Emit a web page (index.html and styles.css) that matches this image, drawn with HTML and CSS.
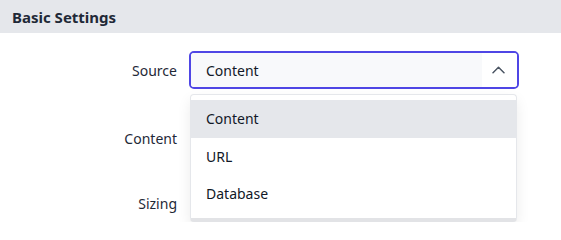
FILE: index.html
```html
<!DOCTYPE html>
<html lang="en">
<head>
<meta charset="utf-8">
<title>Basic Settings</title>
<link rel="stylesheet" href="styles.css">
</head>
<body>
  <div class="section-header">Basic Settings</div>
  <div class="form">
    <div class="row row-source">
      <label class="label">Source</label>
      <div class="select">
        <div class="select-box">
          <span class="select-value">Content</span>
          <span class="select-arrow">
            <svg width="13" height="8" viewBox="0 0 13 8"><polyline points="1,6.8 6.5,1.3 12,6.8" fill="none" stroke="#4b5563" stroke-width="1.5" stroke-linecap="round" stroke-linejoin="round"/></svg>
          </span>
        </div>
        <ul class="menu">
          <li class="menu-item active">Content</li>
          <li class="menu-item">URL</li>
          <li class="menu-item">Database</li>
        </ul>
      </div>
    </div>
    <div class="row row-content">
      <label class="label">Content</label>
      <div class="control"></div>
    </div>
    <div class="row row-sizing">
      <label class="label">Sizing</label>
      <div class="control"></div>
    </div>
  </div>
</body>
</html>
```

FILE: styles.css
```css
* { box-sizing: border-box; }
body {
  margin: 0;
  background: #ffffff;
  font-family: "Noto Sans", "Open Sans", sans-serif;
  font-size: 14px;
  color: #111827;
}
.section-header {
  height: 33px;
  background: #e5e7eb;
  display: flex;
  align-items: center;
  padding-left: 12px;
  font-weight: 700;
  font-size: 15px;
  color: #1f2937;
}
.form {
  padding-top: 18px;
  display: flex;
  flex-direction: column;
}
.row {
  display: grid;
  grid-template-columns: 177px 330px;
  column-gap: 12px;
  align-items: center;
  height: 38px;
}
.row-content { margin-top: 30px; }
.row-sizing { margin-top: 27px; }
.label {
  text-align: right;
  color: #1f2937;
}
.select {
  position: relative;
  height: 38px;
}
.select-box {
  height: 38px;
  border: 2px solid #4f46e5;
  border-radius: 5px;
  display: flex;
  overflow: hidden;
  background: #ffffff;
}
.select-value {
  flex: 1;
  background: #f8f9fb;
  display: flex;
  align-items: center;
  padding-left: 15px;
  color: #111827;
}
.select-arrow {
  width: 35px;
  display: flex;
  align-items: center;
  justify-content: center;
  background: #ffffff;
  padding-right: 2px;
}
.menu {
  position: absolute;
  top: 43px;
  left: 1px;
  width: 327px;
  margin: 0;
  padding: 5px 0 5px;
  list-style: none;
  background: #ffffff;
  border: 1px solid #e5e7eb;
  border-bottom: 4px solid #e2e3e6;
  border-radius: 4px;
  box-shadow: 0 6px 14px rgba(0, 0, 0, 0.08);
  z-index: 10;
}
.menu-item {
  height: 37.5px;
  display: flex;
  align-items: center;
  padding-left: 15px;
  color: #111827;
}
.menu-item.active {
  background: #e5e7eb;
}
.control {
  height: 38px;
}
```
